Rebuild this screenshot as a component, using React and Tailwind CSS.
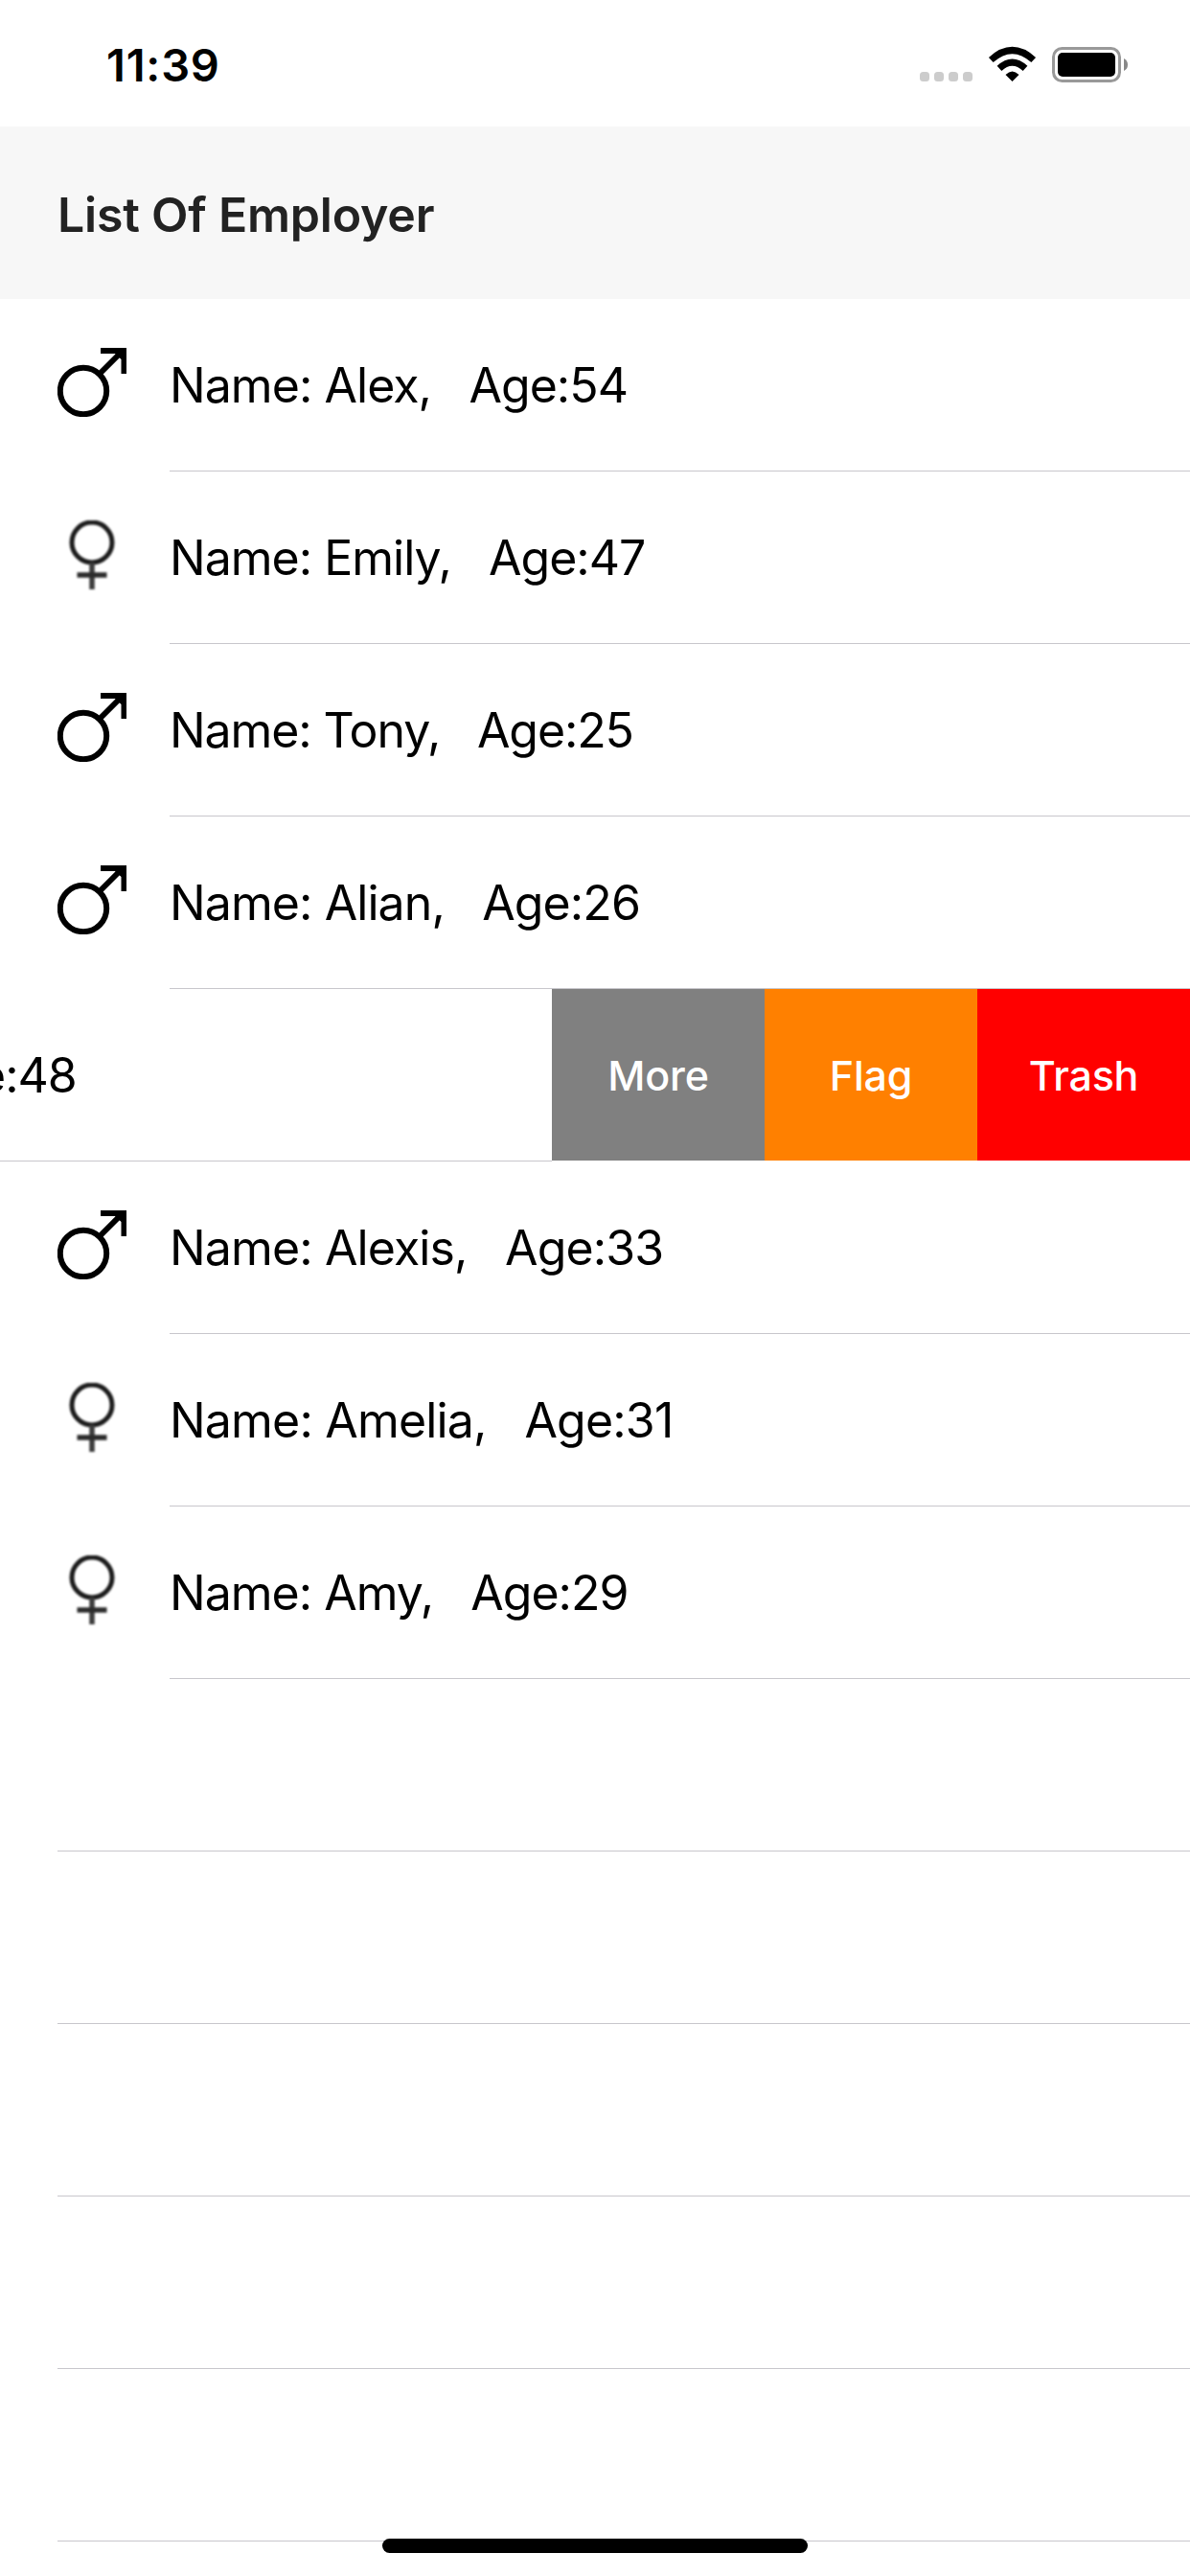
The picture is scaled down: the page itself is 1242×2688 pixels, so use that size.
const rows = [
  { sex: "m", text: "Name: Alex,   Age:54", tracking: "tracking-[-0.95px]" },
  { sex: "f", text: "Name: Emily,   Age:47", tracking: "tracking-[-1px]" },
  { sex: "m", text: "Name: Tony,   Age:25", tracking: "tracking-[-1.13px]" },
  { sex: "m", text: "Name: Alian,   Age:26", tracking: "tracking-[-0.92px]" },
  { swiped: true, text: "e:48" },
  { sex: "m", text: "Name: Alexis,   Age:33", tracking: "tracking-[-0.88px]" },
  { sex: "f", text: "Name: Amelia,   Age:31", tracking: "tracking-[-0.82px]" },
  { sex: "f", text: "Name: Amy,   Age:29", tracking: "tracking-[-1px]" },
];

function Male() {
  return (
    <svg className="blur-[0.6px]" width="72" height="72" viewBox="0 0 72 72" fill="none" stroke="#000">
      <circle cx="27" cy="45" r="24.2" strokeWidth="6" />
      <path d="M44 27 L66 5" strokeWidth="6" />
      <path d="M45 0 H72 V27 H66.500 V12 L60 6 H45 Z" fill="#000" stroke="none" />
    </svg>
  );
}

function Female() {
  return (
    <svg className="blur-[0.9px]" width="72" height="72" viewBox="0 0 72 72" fill="none" stroke="#1c1c1c">
      <circle cx="36" cy="23" r="21" strokeWidth="5" />
      <path d="M36 44 V72" strokeWidth="5.5" stroke="#3c3c3c" />
      <path d="M20.500 57 H51.500" strokeWidth="5.5" stroke="#2c2c2c" />
    </svg>
  );
}

function StatusBar() {
  return (
    <div className="flex h-[132px] items-start justify-between pl-[111px] pr-[62px]">
      <div className="mt-[44px] text-[47px] leading-[48px] font-semibold tracking-[0.8px]">11:39</div>
      <svg className="mt-[44px]" width="222" height="48" viewBox="958 44 222 48">
        <g fill="#ccc">
          <rect x="960" y="75" width="10" height="10" rx="3.5" />
          <rect x="975" y="75" width="10" height="10" rx="3.5" />
          <rect x="990" y="75" width="10" height="10" rx="3.5" />
          <rect x="1005" y="75" width="10" height="10" rx="3.5" />
        </g>
        <path d="M1056.500 85 L1049.500 78 Q1056.500 71 1063.500 78 Z" />
        <path d="M1043 71.300 Q1056.500 58.900 1070 71.300" fill="none" stroke="#000" strokeWidth="7" />
        <path d="M1034.300 62.500 Q1056.500 42.500 1078.700 62.500" fill="none" stroke="#000" strokeWidth="7" />
        <rect x="1099.500" y="50.500" width="69" height="34" rx="9" fill="none" stroke="#999" strokeWidth="3" />
        <rect x="1104" y="55" width="60" height="25" rx="5" />
        <path d="M1173 61 Q1177 63 1177 67.500 Q1177 72 1173 74 Z" fill="#888" />
      </svg>
    </div>
  );
}

export default function App() {
  return (
    <div className="relative h-[2688px] w-[1242px] overflow-hidden bg-white font-['Inter',sans-serif] text-black">
      <StatusBar />
      <div className="flex h-[180px] items-center bg-[#f7f7f7] pt-[4px] pl-[60px]">
        <h1 className="text-[50px] font-semibold tracking-[-0.2px] text-[#222]">List Of Employer</h1>
      </div>
      {rows.map((r) =>
        r.swiped ? (
          <div key={r.text} className="flex h-[180px]">
            <div className="flex w-[576px] items-center border-b border-[#c8c7cc] pt-[2px] text-[50px] tracking-[-1px]">
              <span className="-ml-[23px]">{r.text}</span>
            </div>
            <div className="flex h-[179px] text-[43px] font-medium tracking-[-0.2px] text-white">
              <div className="flex w-[222px] items-center justify-center bg-[#808080] pt-[2px]">More</div>
              <div className="flex w-[222px] items-center justify-center bg-[#ff8000] pt-[2px]">Flag</div>
              <div className="flex w-[222px] items-center justify-center bg-[#ff0000] pt-[2px]">Trash</div>
            </div>
          </div>
        ) : (
          <div key={r.text} className="flex h-[180px] pl-[60px]">
            <div className="w-[117px] pt-[51px]">{r.sex === "m" ? <Male /> : <Female />}</div>
            <div className="flex flex-1 items-center border-b border-[#c8c7cc] pt-[2px] text-[50px] whitespace-pre">
              <span className={r.tracking}>{r.text}</span>
            </div>
          </div>
        )
      )}
      {[0, 1, 2, 3, 4].map((i) => (
        <div key={i} className="ml-[60px] h-[180px] border-b border-[#c8c7cc]" />
      ))}
      <div className="absolute top-[2649px] left-[399px] h-[15px] w-[444px] rounded-full bg-black" />
    </div>
  );
}
